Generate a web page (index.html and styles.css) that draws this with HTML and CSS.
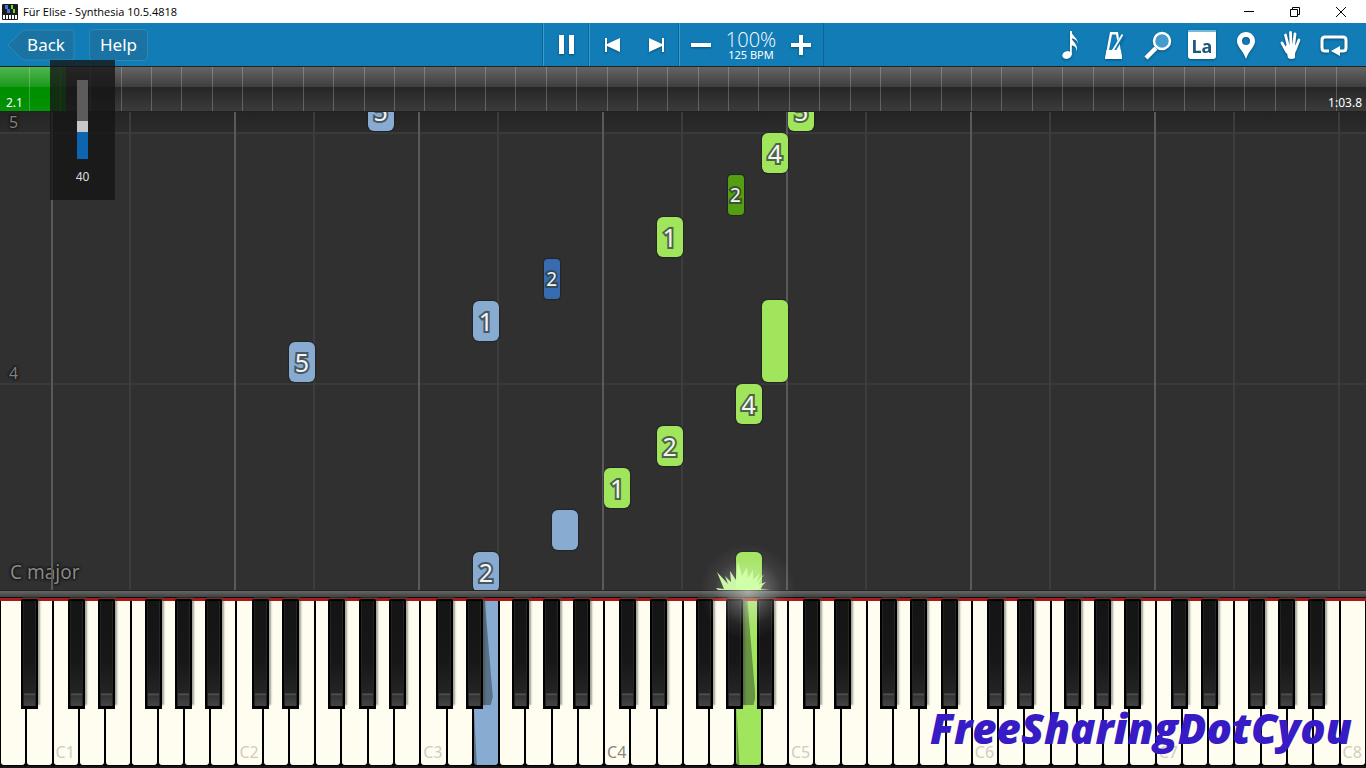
FILE: index.html
```html
<!DOCTYPE html>
<html lang="en">
<head>
<meta charset="utf-8">
<title>Für Elise - Synthesia 10.5.4818</title>
<link rel="stylesheet" href="styles.css">
</head>
<body>
<header class="titlebar">
  <svg class="app-icon" viewBox="0 0 16 16" aria-hidden="true">
    <rect width="16" height="16" rx="1" fill="#1c1c1c"/>
    <path d="M3 1h3v4H3zM5 5h3v4H5z" fill="#3f74d8"/>
    <path d="M9 1h2v4H9zM11 5h2v4h-2z" fill="#78d82a"/>
    <path d="M1 11h2v4H1zM4 11h2v4H4zM7 11h2v4H7zM10 11h2v4h-2zM13 11h2v4h-2z" fill="#fff"/>
  </svg>
  <h1 class="window-title">Für Elise - Synthesia 10.5.4818</h1>
  <div class="window-controls">
    <button class="win-btn" aria-label="Minimize"><svg viewBox="0 0 12 12"><path d="M1 5.500h10"/></svg></button>
    <button class="win-btn" aria-label="Restore"><svg viewBox="0 0 12 12"><path d="M1.500 3.500h7v7h-7zM3.500 3.500v-2h7v7h-2"/></svg></button>
    <button class="win-btn" aria-label="Close"><svg viewBox="0 0 12 12"><path d="M1 1l10 10M11 1L1 11"/></svg></button>
  </div>
</header>

<nav class="toolbar">
  <div class="nav-group">
    <button class="back">
      <svg viewBox="0 0 68 32" aria-hidden="true"><path d="M1 16 14 3q2-2 4-2H64q3 0 3 3V28q0 3-3 3H18q-2 0-4-2z"/></svg>
      <span>Back</span>
    </button>
    <button class="help">Help</button>
  </div>

  <div class="transport">
    <div class="segment pause">
      <button aria-label="Pause"><svg width="20" height="22" viewBox="0 0 20 22"><path d="M3 1h5v19H3zM13 1h5v19h-5z" fill="#fff"/></svg></button>
    </div>
    <div class="segment skip">
      <button aria-label="Previous"><svg width="20" height="20" viewBox="0 0 20 20"><path d="M3 3h2v6l13-6v14L5 11v6H3z" fill="#fff"/></svg></button>
      <button aria-label="Next"><svg width="20" height="20" viewBox="0 0 20 20"><path d="M18 3h-2v6L3 3v14l13-6v6h2z" fill="#fff"/></svg></button>
    </div>
    <div class="segment speed">
      <button aria-label="Slower"><svg width="22" height="22" viewBox="0 0 22 22"><path d="M1 9h20v4H1z" fill="#fff"/></svg></button>
      <div class="tempo"><span class="percent">100%</span><span class="bpm">125 BPM</span></div>
      <button aria-label="Faster"><svg width="22" height="22" viewBox="0 0 22 22"><path d="M1 9h8V1h4v8h8v4h-8v8H9v-8H1z" fill="#fff"/></svg></button>
    </div>
  </div>

  <div class="tools">
    <button aria-label="Sheet music"><svg viewBox="0 0 32 32"><ellipse cx="13" cy="26" rx="4.800" ry="3.800" transform="rotate(-18 13 26)" fill="#fff"/><path d="M16 26V2h1.800v24z" fill="#fff"/><path d="M17 2c1 5 7.500 7 7 14 0-5-4-6-7-7zM17 8c1 5 8 7 5.500 15 .5-5-2.500-6-5.500-7z" fill="#fff"/></svg></button>
    <button aria-label="Metronome"><svg viewBox="0 0 32 32"><path d="M12 3h8l4 27H7z" fill="#fff"/><path d="M14 5.500h4l1.500 8-5 7.500h-3.500z" fill="#117cb5"/><path d="M16 21 24.500 7" stroke="#117cb5" stroke-width="4"/><path d="M14.500 22 24.500 5.500" stroke="#fff" stroke-width="1.800"/><path d="M8.500 21h14.500l1 9H7z" fill="#fff"/></svg></button>
    <button aria-label="Zoom"><svg viewBox="0 0 32 32"><path d="M4 29 14 19" stroke="#fff" stroke-width="4.500"/><circle cx="20" cy="12" r="8" fill="#459ccc" stroke="#fff" stroke-width="2.500"/></svg></button>
    <button aria-label="Note labels"><svg viewBox="0 0 32 32"><path d="M2 1h28v26q0 3-3 3H5q-3 0-3-3z" fill="#fff"/><path d="M2 1h28v2H2z" fill="#75b9dc"/><text x="16" y="24" class="la-text">La</text></svg></button>
    <button aria-label="Bookmarks"><svg viewBox="0 0 32 32"><path fill-rule="evenodd" d="M16 3c5 0 9 4 9 9 0 6-6 9-9 18-3-9-9-12-9-18 0-5 4-9 9-9zm0 5a4 4 0 100 8 4 4 0 000-8z" fill="#fff"/></svg></button>
    <button aria-label="Hands"><svg viewBox="0 0 32 32"><path d="M8 14l5 9M11.500 6l3 12M16.500 3.500l.5 14M21 5l-1.500 13M25 11l-4 10" fill="none" stroke="#fff" stroke-width="2.800" stroke-linecap="round"/><path d="M12.500 16h9l.8 4-1.300 5v4q-3.500 2-7 0l-1-5-3-5z" fill="#fff"/></svg></button>
    <button aria-label="Loop"><svg viewBox="0 0 32 32"><path d="M11 22H7q-3 0-3-3v-8q0-3 3-3H25q3 0 3 3v8q0 3-3 3h-4" fill="none" stroke="#fff" stroke-width="3"/><path d="M13 22l9-5v10z" fill="#fff"/></svg></button>
  </div>
</nav>

<section class="timeline" aria-label="Song position">
  <div class="played"></div>
  <div class="measures" id="measures"></div>
  <span class="time time-now">2.1</span>
  <span class="time time-end">1:03.8</span>
</section>

<main class="stage">
  <section class="roll" id="roll" aria-label="Falling notes">
    <div class="bar-line bar-4"><span>4</span></div>
    <div class="bar-line bar-5"><span>5</span></div>
    <p class="key-name">C major</p>
  </section>
  <div class="rail"></div>
  <section class="keyboard" id="keyboard" aria-label="Piano"></section>
  <svg class="splash" viewBox="0 0 120 120" aria-hidden="true">
    <defs>
      <radialGradient id="glow"><stop offset="0" stop-color="#f0ffe0" stop-opacity=".5"/><stop offset=".35" stop-color="#eee" stop-opacity=".28"/><stop offset=".7" stop-color="#eee" stop-opacity=".07"/><stop offset="1" stop-color="#fff" stop-opacity="0"/></radialGradient>
    </defs>
    <circle cx="66" cy="62" r="48" fill="url(#glow)"/>
    <path d="M36 60 34 58 42 59 35 42 46 54 43 46 49 52 48 41 54 50 56 32 60 46 65 37 66 48 71 40 71 50 78 43 74 53 82 44 76 55 84 52 77 59 88 60z" fill="#d2ffab" fill-opacity=".95"/>
  </svg>
  <p class="watermark">FreeSharingDotCyou</p>
</main>

<label class="volume">
  <input type="range" min="0" max="100" value="40" aria-label="Volume">
  <span>40</span>
</label>
<script src="piano.js"></script>
</body>
</html>
```
FILE: styles.css
```css
* { box-sizing: border-box; }

body {
  margin: 0;
  height: 100vh;
  display: flex;
  flex-direction: column;
  overflow: hidden;
  position: relative;
  background: #1a1a1a;
  font-family: "Noto Sans", "Open Sans", sans-serif;
  color: #fff;
}

button {
  margin: 0;
  padding: 0;
  border: 0;
  background: none;
  color: inherit;
  font: inherit;
  display: flex;
  align-items: center;
  justify-content: center;
}

p { margin: 0; }

/* Window title bar */
.titlebar {
  height: 23px;
  flex: none;
  display: flex;
  align-items: center;
  background: #fff;
  color: #000;
  padding-left: 2px;
}
.app-icon { width: 16px; height: 16px; }
.window-title {
  margin: 0 auto 0 5px;
  font: 11px/16px "Open Sans", "Noto Sans", sans-serif;
}
.window-controls { display: flex; margin-right: 2px; }
.win-btn { width: 46px; height: 20px; }
.win-btn svg {
  width: 12px;
  height: 12px;
  fill: none;
  stroke: #000;
  stroke-width: 1;
}

/* Toolbar */
.toolbar {
  height: 44px;
  flex: none;
  display: grid;
  grid-template-columns: 1fr auto 1fr;
  background: #117cb5;
  border-bottom: 1px solid #222;
}
.nav-group {
  display: flex;
  align-items: center;
  gap: 14px;
  padding-left: 7px;
  font-size: 17px;
}
.back { position: relative; width: 68px; height: 32px; padding-left: 10px; }
.back svg {
  position: absolute;
  inset: 0;
  fill: #1a73a3;
  stroke: #2c88b7;
}
.back span { position: relative; }
.help {
  width: 59px;
  height: 32px;
  border: 1px solid #2c88b7;
  border-radius: 4px;
  background: #1a73a3;
}
.transport { display: flex; border-right: 1px solid #0d6596; }
.segment {
  display: flex;
  align-items: center;
  justify-content: center;
  border-left: 1px solid #0d6596;
  box-shadow: inset 1px 0 #3b9bcc;
}
.pause { width: 46px; }
.skip { width: 90px; gap: 24px; }
.speed { width: 145px; gap: 14px; }
.transport svg, .tools svg { filter: drop-shadow(0 1px 1px #0b4f75); }
.tempo {
  display: flex;
  flex-direction: column;
  align-items: center;
  width: 50px;
  padding-top: 2px;
  white-space: nowrap;
}
.percent { font: 300 20px/18px "Open Sans", sans-serif; }
.bpm { font: 11px/12px "Noto Sans", sans-serif; }
.tools {
  display: flex;
  align-items: center;
  justify-content: flex-end;
  padding-right: 10px;
}
.tools button { width: 44px; }
.tools svg { width: 32px; height: 32px; }
.la-text {
  font: bold 18px "Noto Sans", sans-serif;
  fill: #1f5878;
  text-anchor: middle;
}

/* Song timeline */
.timeline {
  height: 44px;
  flex: none;
  position: relative;
  background: linear-gradient(#646464, #3e3e3e 20px, #262626 20px, #3b3b3b);
}
.played {
  position: absolute;
  inset: 0 auto 0 0;
  width: 4.8%;
  background: linear-gradient(#50b650, #1b991b 20px, #008f00 20px, #008f00 34px, #069506);
}
.measures { position: absolute; inset: 0; display: flex; }
.measures i { flex: 1; border-right: 1px solid rgba(255, 255, 255, .22); }
.measures i:last-child { border: 0; }
.time { position: absolute; bottom: 0; font-size: 12px; line-height: 17px; }
.time-now { left: 6px; }
.time-end { right: 4px; }

/* Falling notes */
.stage { flex: 1; min-height: 0; display: flex; flex-direction: column; position: relative; }
.roll {
  flex: 1;
  min-height: 0;
  position: relative;
  overflow: hidden;
  background: linear-gradient(#242424, #2c2c2c 21px, #303030 21px);
  border-top: 1px solid #222;
}
.octave { position: absolute; inset: 0 auto 0 0; width: 2px; margin-left: -2px; background: #3c3c3c; }
.octave.c { background: #5a5a5a; }
.bar-line { position: absolute; left: 0; right: 0; height: 2px; background: #3a3a3a; }
.bar-line span {
  position: absolute;
  left: 9px;
  bottom: 3px;
  font-size: 16px;
  line-height: 17px;
  color: #808080;
  text-shadow: 0 0 3px #111, 0 0 3px #111, 0 0 2px #111;
}
.bar-4 { bottom: 205px; }
.bar-5 { bottom: 456px; }
.key-name {
  position: absolute;
  left: 10px;
  bottom: 4px;
  font-size: 19px;
  line-height: 28px;
  color: #888;
  text-shadow: 0 0 3px #111, 0 0 3px #111, 0 0 2px #111;
}
.note {
  position: absolute;
  width: 26px;
  height: 40px;
  border-radius: 6px;
  display: flex;
  align-items: center;
  justify-content: center;
  font-size: 25px;
  line-height: 30px;
  padding-bottom: 1px;
  color: #f4f4f4;
  -webkit-text-stroke: 4px rgba(50, 60, 60, .75);
  paint-order: stroke fill;
  box-shadow: 0 0 1px 1px rgba(20, 20, 20, .4);
}
.note.left { background: #87abd1; }
.note.right { background: #a1e55d; }
.note.long { height: 82px; }
.note.sharp { width: 16px; border-radius: 4px; font-size: 19px; margin-left: -8px; }
.note.sharp.left { background: #386cb0; }
.note.sharp.right { background: #549e12; }

/* Keyboard */
.rail {
  height: 8px;
  flex: none;
  background: linear-gradient(#242424 1px, #666 1px, #424242 7px, #111 7px);
}
.keyboard {
  height: 170px;
  flex: none;
  display: flex;
  border-top: 3px solid #a51b1b;
  border-bottom: 2px solid #161616;
  background: #000;
}
.white {
  flex: 1;
  min-width: 0;
  position: relative;
  align-items: flex-end;
  justify-content: flex-start;
  background: #fffdf0;
  border: 1px solid #000;
  border-width: 0 1px 1px;
  border-radius: 0 0 4px 4px;
  font-size: 16px;
  line-height: 24px;
  padding: 0 0 1px 2px;
  color: #cfcec1;
}
.white.middle { color: #88877f; }
.white.down-left { background: #87abd1; }
.white.down-right { background: #a1e55d; }
.white.down-left::before, .white.down-right::before {
  content: "";
  position: absolute;
  inset: 0 auto 0 0;
  width: 19px;
  background: rgba(20, 30, 30, .4);
  clip-path: polygon(0 0, 11px 0, 19px 96px, 17px 104px, 0 104px, 3px 100%, 0 100%);
}
.black {
  position: absolute;
  z-index: 1;
  top: -2px;
  width: 17px;
  height: 110px;
  border: 2px solid #000;
  border-bottom-width: 3px;
  border-radius: 2px 2px 0 0;
  background: linear-gradient(#141414, #171717 60px, #242424 92px, #555 93px, #333 95px, #444);
  box-shadow: inset 1px 0 #222, inset -1px 0 #262626, 2px -4px 2px rgba(70, 70, 60, .5);
}

.splash {
  position: absolute;
  z-index: 2;
  left: calc(54.3% - 60px);
  bottom: 118px;
  width: 120px;
  height: 120px;
}
.watermark {
  position: absolute;
  z-index: 3;
  right: 14px;
  bottom: 12px;
  font: italic 800 42px/56px "Open Sans", sans-serif;
  color: #371bc4;
}

/* Volume popup */
.volume {
  position: absolute;
  z-index: 4;
  left: 50px;
  top: 60px;
  width: 65px;
  height: 140px;
  padding-top: 20px;
  display: flex;
  flex-direction: column;
  align-items: center;
  gap: 9px;
  background: rgba(21, 21, 21, .8);
  font-size: 12px;
  line-height: 18px;
  color: #ddd;
}
.volume input {
  appearance: none;
  writing-mode: vertical-lr;
  direction: rtl;
  width: 11px;
  height: 79px;
  margin: 0;
  background: linear-gradient(to top, #0d65b0 40%, #5c5c5c 40%);
}
.volume input::-webkit-slider-thumb {
  appearance: none;
  width: 11px;
  height: 11px;
  background: #c8c8c8;
}
```
FILE: piano.js
```javascript
const WHITE_KEYS = 52;
const BEAT = 41.9;
const percent = (keys) => (keys / WHITE_KEYS) * 100 + '%';

const measures = document.getElementById('measures');
for (let i = 0; i < 45; i++) measures.append(document.createElement('i'));

// Octave guides: a bright line at each C, a dim one at each F.
const roll = document.getElementById('roll');
for (let key = 2; key < WHITE_KEYS; key += 7) {
  for (const [offset, name] of [[0, 'octave c'], [3, 'octave']]) {
    if (key + offset >= WHITE_KEYS) continue;
    const line = document.createElement('div');
    line.className = key === 51 ? 'octave' : name;
    line.style.left = percent(key + offset);
    roll.append(line);
  }
}

// [white key position, beat, hand and shape, finger]
const notes = [
  [18, 0, 'left', '2'], [28, 0, 'right', ''], [21, 1, 'left', ''],
  [23, 2, 'right', '1'], [25, 3, 'right', '2'], [28, 4, 'right', '4'],
  [11, 5, 'left', '5'], [29, 5, 'right long', ''], [18, 6, 'left', '1'],
  [21, 7, 'left sharp', '2'], [25, 8, 'right', '1'],
  [28, 9, 'right sharp', '2'], [29, 10, 'right', '4'],
  [14, 11, 'left', '5'], [30, 11, 'right', '5']
];
for (const [key, beat, kind, finger] of notes) {
  const note = document.createElement('div');
  note.className = 'note ' + kind;
  note.style.left = percent(key);
  note.style.bottom = Math.round(beat * BEAT) - 2 + 'px';
  note.textContent = finger;
  roll.append(note);
}

// Shift of each black key's centre from the gap to the right of its white key.
const sharps = { A: 4, C: -2, D: 2, F: -4, G: 0 };
const names = 'ABCDEFG';
const keyboard = document.getElementById('keyboard');
for (let i = 0; i < WHITE_KEYS; i++) {
  const name = names[i % 7];
  const octave = Math.floor((i + 5) / 7);
  const key = document.createElement('button');
  key.className = 'white';
  key.setAttribute('aria-label', name + octave);
  if (name === 'C') key.textContent = 'C' + octave;
  if (i === 23) key.classList.add('middle');
  if (i === 18) key.classList.add('down-left');
  if (i === 28) key.classList.add('down-right');
  if (name in sharps && i < WHITE_KEYS - 1) {
    const black = document.createElement('span');
    black.className = 'black';
    black.style.left = `calc(100% + ${sharps[name] - 8}px)`;
    key.append(black);
  }
  keyboard.append(key);
}
```
